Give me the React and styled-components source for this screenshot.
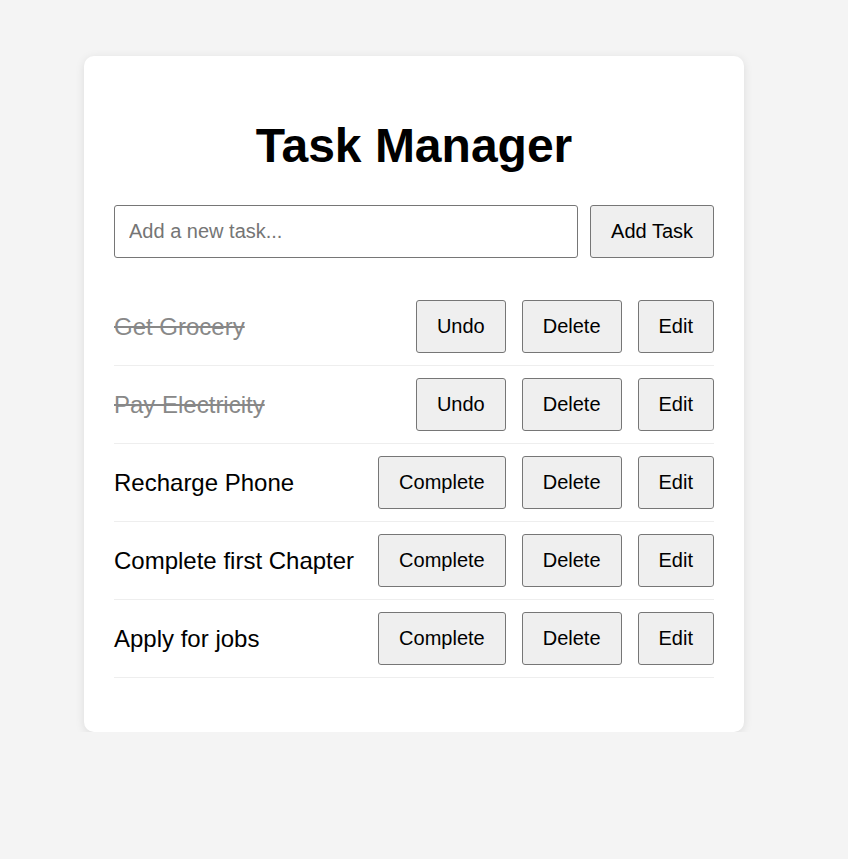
import React, { useState } from 'react';
import styled, { createGlobalStyle } from 'styled-components';

const GlobalStyle = createGlobalStyle`
  body {
    margin: 0;
    background-color: #f4f4f4;
    font-family: "Liberation Sans", Arial, sans-serif;
  }
`;

const Card = styled.div`
  box-sizing: border-box;
  width: 660px;
  margin: 56px 0 0 84px;
  padding: 30px;
  background-color: #fff;
  border-radius: 10px;
  box-shadow: 0 2px 10px rgba(0, 0, 0, 0.1);
`;

const Title = styled.h1`
  font-size: 48px;
  font-weight: bold;
  text-align: center;
  margin: 32px 0;
  color: #000;
`;

const Form = styled.div`
  display: flex;
  gap: 12px;
  margin-bottom: 30px;
`;

const Input = styled.input`
  flex: 1;
  min-width: 0;
  padding: 14px;
  font-family: inherit;
  font-size: 20px;
  border: 1px solid #767676;
  border-radius: 3px;
  color: #000;

  &::placeholder {
    color: #757575;
  }
`;

const Button = styled.button`
  padding: 14px 20px;
  font-family: inherit;
  font-size: 20px;
  color: #000;
  background-color: #efefef;
  border: 1px solid #767676;
  border-radius: 3px;
  cursor: pointer;
`;

const List = styled.ul`
  list-style: none;
  margin: 0 0 24px;
  padding: 0;
`;

const Row = styled.li`
  display: flex;
  justify-content: space-between;
  align-items: center;
  padding: 12px 0;
  border-bottom: 1px solid #eee;
`;

const TaskText = styled.span`
  font-size: 24px;
  color: ${(p) => (p.done ? '#888' : '#000')};
  text-decoration: ${(p) => (p.done ? 'line-through' : 'none')};
`;

const Actions = styled.div`
  display: flex;
  gap: 16px;
`;

const initialTasks = [
  { id: 1, text: 'Get Grocery', done: true },
  { id: 2, text: 'Pay Electricity', done: true },
  { id: 3, text: 'Recharge Phone', done: false },
  { id: 4, text: 'Complete first Chapter', done: false },
  { id: 5, text: 'Apply for jobs', done: false },
];

const App = () => {
  const [tasks, setTasks] = useState(initialTasks);
  const [value, setValue] = useState('');

  const addTask = () => {
    if (!value.trim()) return;
    setTasks([...tasks, { id: Date.now(), text: value.trim(), done: false }]);
    setValue('');
  };

  const toggle = (id) => {
    setTasks(tasks.map((t) => (t.id === id ? { ...t, done: !t.done } : t)));
  };

  const remove = (id) => {
    setTasks(tasks.filter((t) => t.id !== id));
  };

  return (
    <>
      <GlobalStyle />
      <Card>
        <Title>Task Manager</Title>
        <Form>
          <Input
            placeholder="Add a new task..."
            value={value}
            onChange={(e) => setValue(e.target.value)}
          />
          <Button type="button" onClick={addTask}>Add Task</Button>
        </Form>
        <List>
          {tasks.map((task) => (
            <Row key={task.id}>
              <TaskText done={task.done}>{task.text}</TaskText>
              <Actions>
                <Button type="button" onClick={() => toggle(task.id)}>
                  {task.done ? 'Undo' : 'Complete'}
                </Button>
                <Button type="button" onClick={() => remove(task.id)}>Delete</Button>
                <Button type="button">Edit</Button>
              </Actions>
            </Row>
          ))}
        </List>
      </Card>
    </>
  );
};

export default App;
